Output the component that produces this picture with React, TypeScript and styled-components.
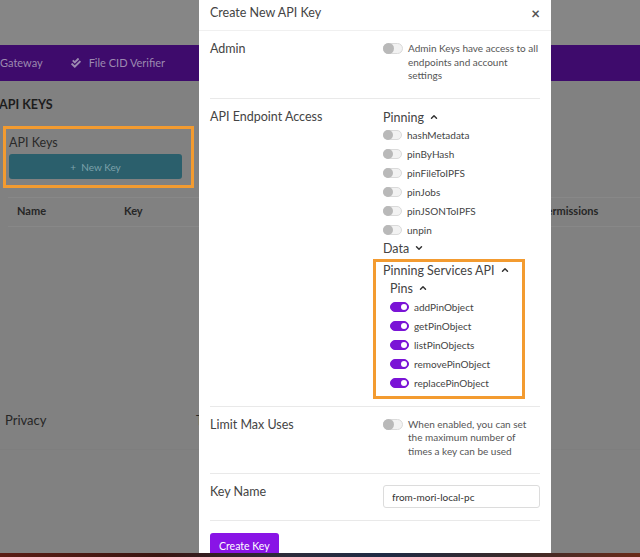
import styled, { createGlobalStyle } from "styled-components";
import { ChevronUp, ChevronDown } from "lucide-react";
import { FaCheckDouble } from "react-icons/fa";

const GlobalStyle = createGlobalStyle`
  html, body {
    margin: 0;
    padding: 0;
    background: #818181;
  }
  body {
    font-family: "Lato", "Helvetica Neue", Arial, sans-serif;
  }
  * {
    box-sizing: border-box;
  }
`;

const pinningEndpoints = [
  "hashMetadata",
  "pinByHash",
  "pinFileToIPFS",
  "pinJobs",
  "pinJSONToIPFS",
  "unpin",
];

const pinsEndpoints = [
  "addPinObject",
  "getPinObject",
  "listPinObjects",
  "removePinObject",
  "replacePinObject",
];

const Caret = ({ open }: { open: boolean }) =>
  open ? (
    <ChevronUp size={10} strokeWidth={3.5} />
  ) : (
    <ChevronDown size={10} strokeWidth={3.5} />
  );

const App = () => {
  return (
    <>
      <GlobalStyle />
      <Screen>
        <TopBar />
        <Nav>
          <NavItem>Gateway</NavItem>
          <NavItem>
            <FaCheckDouble size={10} />
            File CID Verifier
          </NavItem>
        </Nav>
        <Main>
          <PageTitle>API KEYS</PageTitle>
          <KeysCard>
            <CardTitle>API Keys</CardTitle>
            <NewKeyBtn>+&nbsp;&nbsp;New Key</NewKeyBtn>
          </KeysCard>
          <TableHead>
            <HeadCell $w={107}>Name</HeadCell>
            <HeadCell $w={150}>Key</HeadCell>
            <HeadCell $w={266}>Admin</HeadCell>
            <HeadCell $w={80}>Permissions</HeadCell>
          </TableHead>
        </Main>
        <Footer>
          <FooterLink $w={191}>Privacy</FooterLink>
          <FooterLink $w={80}>Terms</FooterLink>
        </Footer>
        <Dock />

        <Modal>
          <ModalHeader>
            <ModalTitle>Create New API Key</ModalTitle>
            <CloseBtn>×</CloseBtn>
          </ModalHeader>
          <ModalBody>
            <FormRow>
              <Label>Admin</Label>
              <OptionLine>
                <Toggle />
                <Hint>
                  Admin Keys have access to all endpoints and account settings
                </Hint>
              </OptionLine>
            </FormRow>

            <FormRow $bottom={7}>
              <Label>API Endpoint Access</Label>
              <div>
                <GroupTitle>
                  Pinning <Caret open />
                </GroupTitle>
                {pinningEndpoints.map((name) => (
                  <EndpointRow key={name}>
                    <Toggle $small />
                    {name}
                  </EndpointRow>
                ))}
                <GroupTitle>
                  Data <Caret open={false} />
                </GroupTitle>
                <Highlight>
                  <GroupTitle>
                    Pinning Services API <Caret open />
                  </GroupTitle>
                  <SubGroup>
                    <GroupTitle>
                      Pins <Caret open />
                    </GroupTitle>
                    <EndpointList>
                      {pinsEndpoints.map((name) => (
                        <EndpointRow key={name}>
                          <Toggle $small $on />
                          {name}
                        </EndpointRow>
                      ))}
                    </EndpointList>
                  </SubGroup>
                </Highlight>
              </div>
            </FormRow>

            <FormRow>
              <Label>Limit Max Uses</Label>
              <OptionLine>
                <Toggle />
                <Hint>
                  When enabled, you can set the maximum number of times a key
                  can be used
                </Hint>
              </OptionLine>
            </FormRow>

            <FormRow $bottom={12}>
              <Label>Key Name</Label>
              <NameInput defaultValue="from-mori-local-pc" />
            </FormRow>

            <CreateBtn>Create Key</CreateBtn>
          </ModalBody>
        </Modal>
      </Screen>
    </>
  );
};

export default App;

const Screen = styled.div`
  position: relative;
  width: 640px;
  height: 557px;
  overflow: hidden;
  background: #818181;
  display: flex;
  flex-direction: column;
`;

const TopBar = styled.div`
  height: 45px;
  background: #868686;
  flex: none;
`;

const Nav = styled.div`
  height: 36px;
  flex: none;
  background: #3e0b6c;
  display: flex;
  align-items: center;
  gap: 28px;
  padding-bottom: 1px;
`;

const NavItem = styled.span`
  display: flex;
  align-items: center;
  gap: 8px;
  font-size: 11px;
  color: #9c8ab0;
`;

const Main = styled.div`
  padding-top: 16px;
  height: 309px;
  flex: none;
`;

const PageTitle = styled.h1`
  margin: 0 0 14px -1px;
  font-size: 12.5px;
  line-height: 15px;
  font-weight: 700;
  color: #1d1d1d;
`;

const KeysCard = styled.div`
  margin-left: 3px;
  width: 191px;
  border: 3px solid #f39b30;
  padding: 5px 9px 6px 3px;
`;

const CardTitle = styled.div`
  font-size: 12.5px;
  line-height: 17px;
  color: #2a2a2a;
  margin-bottom: 3px;
`;

const NewKeyBtn = styled.div`
  height: 25px;
  border-radius: 3px;
  background: #2b5f6c;
  color: #7da2ab;
  font-size: 10px;
  display: flex;
  align-items: center;
  justify-content: center;
`;

const TableHead = styled.div`
  margin: 9px 0 0 8px;
  height: 30px;
  border-top: 1px solid #888;
  border-bottom: 1px solid #888;
  display: flex;
  align-items: center;
  padding: 0 0 4px 9px;
`;

const HeadCell = styled.span<{ $w: number }>`
  width: ${(p) => p.$w}px;
  flex: none;
  font-size: 11px;
  font-weight: 700;
  color: #262626;
`;

const Footer = styled.div`
  height: 60px;
  flex: none;
  display: flex;
  align-items: center;
  padding: 0 0 0 5px;
  border-bottom: 1px solid #7e7e7e;
`;

const FooterLink = styled.span<{ $w: number }>`
  width: ${(p) => p.$w}px;
  font-size: 13px;
  color: #262626;
`;

const Dock = styled.div`
  margin-top: auto;
  height: 4px;
  background: linear-gradient(
    90deg,
    #5a1c14 0%,
    #3a1410 25%,
    #2c2c3c 45%,
    #1f2b45 60%,
    #3a2a2a 80%,
    #6a2a18 100%
  );
  position: relative;
  z-index: 3;
`;

const Modal = styled.div`
  position: absolute;
  top: 0;
  left: 199px;
  width: 352px;
  bottom: 0;
  background: #fff;
  z-index: 2;
`;

const ModalHeader = styled.div`
  height: 31px;
  padding: 5px 11px 0;
  display: flex;
  align-items: flex-start;
  justify-content: space-between;
  border-bottom: 1px solid #f0f0f0;
`;

const ModalTitle = styled.div`
  font-size: 12.5px;
  line-height: 16px;
  color: #444;
`;

const CloseBtn = styled.span`
  font-size: 15px;
  line-height: 16px;
  font-weight: 700;
  color: #555;
`;

const ModalBody = styled.div`
  padding: 0 11px;
`;

const FormRow = styled.div<{ $bottom?: number }>`
  display: grid;
  grid-template-columns: 173px 1fr;
  align-items: start;
  padding: 10px 0 ${(p) => p.$bottom ?? 15}px;
  border-bottom: 1px solid #e9e9e9;
`;

const Label = styled.div`
  font-size: 12.5px;
  line-height: 16px;
  color: #444;
`;

const OptionLine = styled.div`
  display: flex;
  align-items: flex-start;
  gap: 5px;
  padding-top: 2px;
`;

const Hint = styled.div`
  font-size: 10px;
  line-height: 13.5px;
  color: #555;
  margin-top: -1px;
`;

const Toggle = styled.span<{ $on?: boolean; $small?: boolean }>`
  position: relative;
  flex: none;
  display: inline-block;
  width: ${(p) => (p.$small ? 19 : 20)}px;
  height: ${(p) => (p.$small ? 10 : 11)}px;
  border-radius: 6px;
  background: ${(p) => (p.$on ? "#7a14d6" : "#f2f2f2")};
  border: 1px solid ${(p) => (p.$on ? "#7a14d6" : "#dadada")};

  &::after {
    content: "";
    position: absolute;
    top: ${(p) => (p.$on ? 1 : -1)}px;
    left: ${(p) => (p.$on ? "auto" : "-1px")};
    right: ${(p) => (p.$on ? "1px" : "auto")};
    width: ${(p) => (p.$on ? 6 : p.$small ? 10 : 11)}px;
    height: ${(p) => (p.$on ? 6 : p.$small ? 10 : 11)}px;
    border-radius: 50%;
    background: ${(p) => (p.$on ? "#fff" : "#b9b9b9")};
  }
`;

const GroupTitle = styled.div`
  display: flex;
  align-items: center;
  gap: 5px;
  height: 17px;
  font-size: 12.5px;
  color: #444;

  svg {
    color: #333;
  }
`;

const EndpointRow = styled.div`
  height: 19px;
  display: flex;
  align-items: center;
  gap: 5px;
  font-size: 10px;
  color: #444;
`;

const EndpointList = styled.div`
  margin-top: 1px;
`;

const Highlight = styled.div`
  margin: 2px 0 0 -10px;
  width: 152px;
  border: 3px solid #f39b30;
  padding: 0 0 3px 7px;
`;

const SubGroup = styled.div`
  padding-left: 7px;
  margin-top: 1px;
`;

const NameInput = styled.input`
  margin-top: 1px;
  height: 23px;
  width: 157px;
  border: 1px solid #dcdcdc;
  border-radius: 3px;
  padding: 0 8px;
  font-family: inherit;
  font-size: 10px;
  color: #333;
  outline: none;
`;

const CreateBtn = styled.button`
  margin-top: 12px;
  height: 26px;
  padding: 0 9px;
  border: none;
  border-radius: 3px;
  background: #8914e6;
  color: #fff;
  font-family: inherit;
  font-size: 10.5px;
`;
